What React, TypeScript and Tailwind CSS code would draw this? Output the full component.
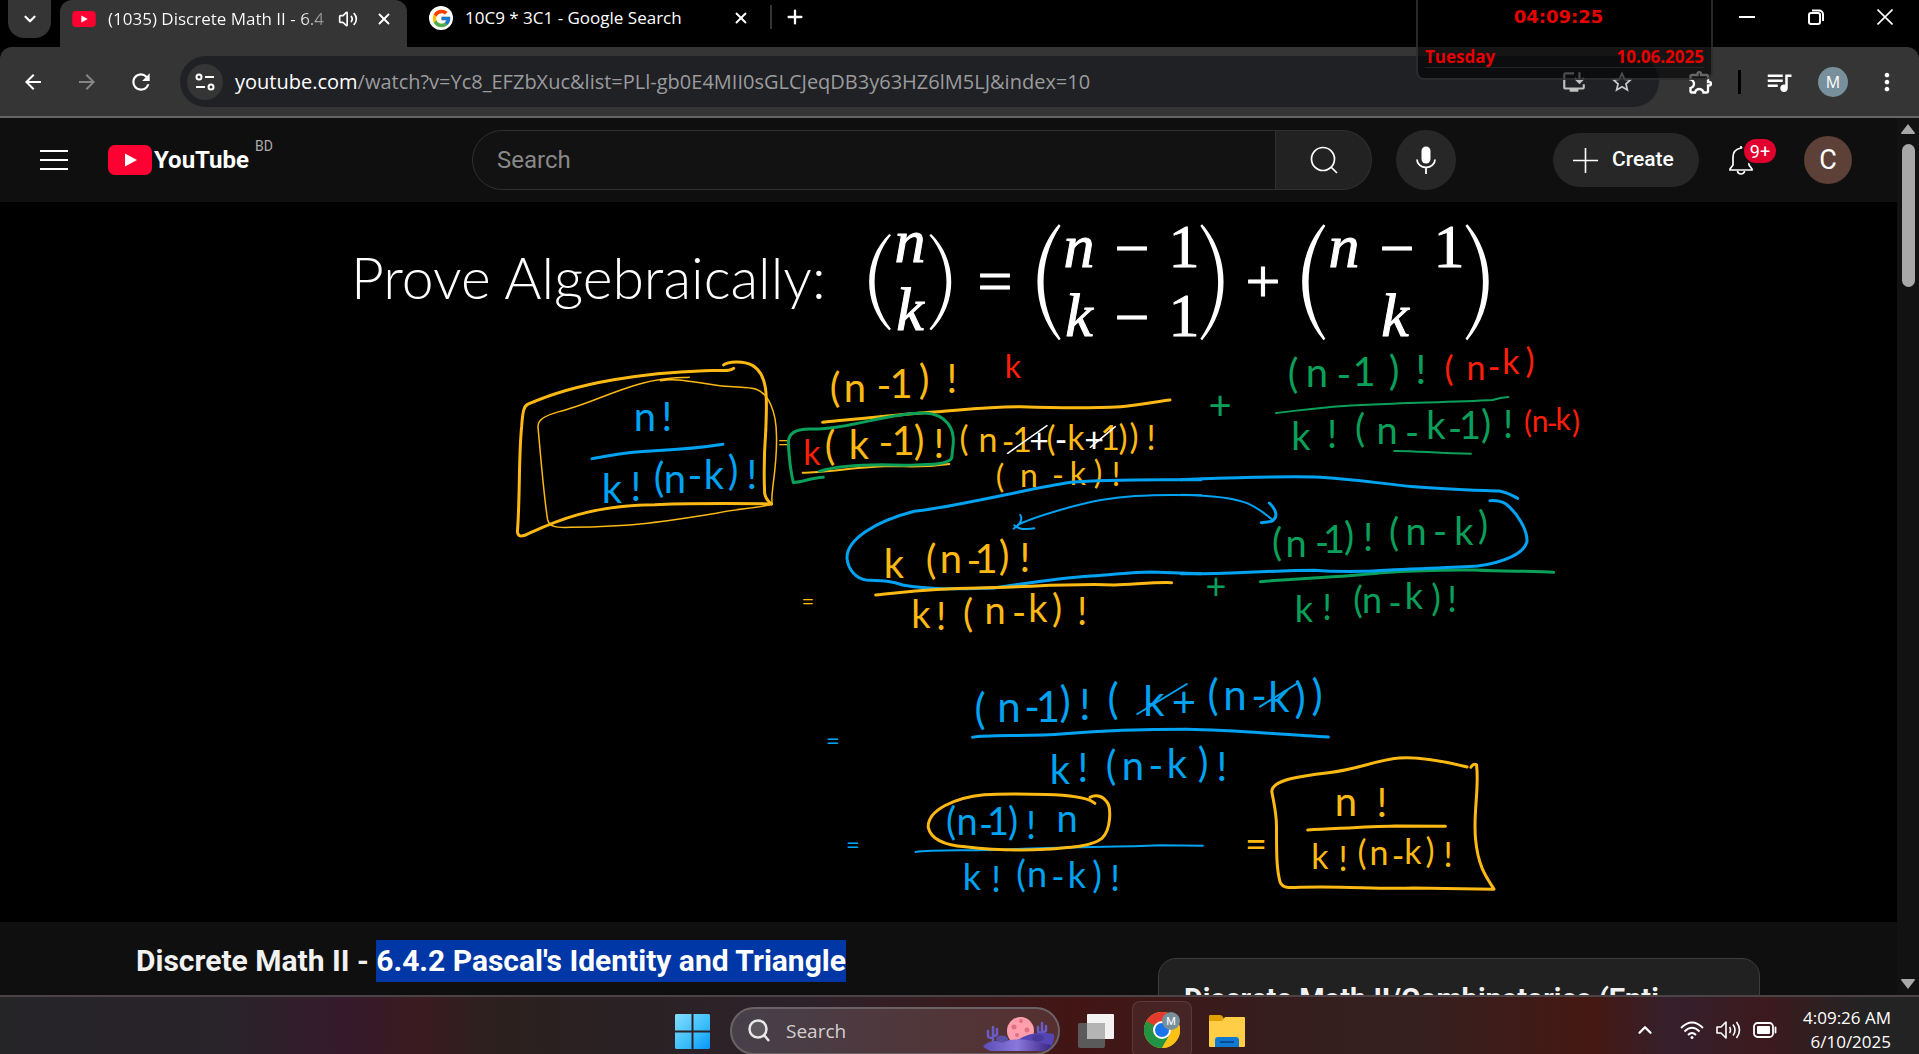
import React from 'react';
import { FcGoogle } from 'react-icons/fc';
import {
  MdArrowBack,
  MdArrowForward,
  MdMoreVert,
  MdOutlineExtension,
  MdOutlineInstallDesktop,
  MdQueueMusic,
  MdRefresh,
  MdStarOutline,
} from 'react-icons/md';
import { ChevronDown, ChevronUp, Plus, Volume2, X } from 'lucide-react';

const YELLOW = '#fdb913';
const BLUE = '#00a2f2';
const GREEN = '#0aa05a';
const RED = '#ff1e0a';

type Mark = [string, number, number, string?];

/** One handwritten expression; every mark has its centre x and its baseline. */
function Ink({ color, size, marks }: { color: string; size: number; marks: Mark[] }) {
  return (
    <text fill={color} fontSize={size} textAnchor="middle">
      {marks.map(([ch, x, y, own], i) => (
        <tspan key={i} x={x} y={y} fill={own ?? color}>
          {ch}
        </tspan>
      ))}
    </text>
  );
}

function Stroke({ d, color, w = 3 }: { d: string; color: string; w?: number }) {
  return <path d={d} stroke={color} strokeWidth={w} vectorEffect="non-scaling-stroke" />;
}

function Whiteboard() {
  return (
    <svg
      viewBox="308 202 1280 720"
      className="block h-[720px] w-[1280px] max-w-full"
      fontFamily="Lato, sans-serif"
      fill="none"
      strokeLinecap="round"
      strokeLinejoin="round"
      role="img"
      aria-label="Algebraic proof of Pascal's identity"
    >
      <text x="350" y="299" fontSize="57" fill="#fff" fontWeight="300">
        Prove Algebraically:
      </text>

      <g fill="#fff" fontFamily="'Liberation Serif', serif" fontSize="62" stroke="#fff" strokeWidth="1" textAnchor="middle">
        <text x="909" y="262" fontStyle="italic">n</text>
        <text x="909" y="330" fontStyle="italic">k</text>
        <text x="994" y="302">=</text>
        <text><tspan x="1078" y="267" fontStyle="italic">n</tspan><tspan x="1131" y="269">−</tspan><tspan x="1183" y="267">1</tspan></text>
        <text><tspan x="1078" y="336" fontStyle="italic">k</tspan><tspan x="1131" y="338">−</tspan><tspan x="1183" y="336">1</tspan></text>
        <text x="1262" y="302">+</text>
        <text><tspan x="1343" y="267" fontStyle="italic">n</tspan><tspan x="1396" y="269">−</tspan><tspan x="1448" y="267">1</tspan></text>
        <text x="1394" y="336" fontStyle="italic">k</text>
      </g>
      <g fill="#fff" transform="translate(840 210) scale(.4464 .3333)">
        <path d="M108 72C48 150 48 282 108 361L112 357C63 275 63 155 112 76Z" />
        <path d="M202 72C262 150 262 282 202 361L198 357C249 275 249 155 198 76Z" />
        <path d="M488 43C424 140 424 292 488 391L492 386C441 285 441 148 492 47Z" />
        <path d="M809 43C873 140 873 292 809 391L805 386C858 285 858 148 805 47Z" />
        <path d="M1081 43C1017 140 1017 292 1081 391L1085 386C1035 285 1035 148 1085 47Z" />
        <path d="M1403 43C1467 140 1467 292 1403 391L1399 386C1451 285 1451 148 1399 47Z" />
      </g>

      {/* Left side: n! / k!(n-k)! in its double box */}
      <g transform="translate(340 210) scale(.3827 .3333)">
        <Stroke color={YELLOW} w={3} d="M1026 475C1015 486 990 480 950 482C800 488 620 515 490 582C478 588 475 600 472 650C464 740 468 860 461 965C462 978 468 980 480 976C540 945 640 885 820 884C930 880 1020 880 1125 882" />
        <Stroke color={YELLOW} w={3} d="M1000 465C1010 455 1050 450 1075 466C1120 495 1112 580 1110 660C1105 740 1105 800 1107 850Q1110 870 1125 882" />
        <Stroke color={YELLOW} w={1.5} d="M910 502C860 505 830 505 780 522C700 548 640 585 570 605C530 618 512 630 515 655C522 740 530 860 540 930C545 950 560 954 600 952C760 950 850 935 980 910C1040 895 1090 895 1127 882C1120 860 1140 780 1138 680C1138 600 1115 550 1085 538C1060 528 1020 535 960 522C900 512 870 505 835 512" />
        <Stroke color={BLUE} w={3} d="M656 746C700 738 740 725 820 722C900 718 950 712 998 703" />
      </g>
      <Ink color={BLUE} size={40} marks={[['n', 644, 431], ['!', 666, 431]]} />
      <Ink color={BLUE} size={40} marks={[['k', 611, 503], ['!', 635, 501], ['(', 658, 492], ['n', 674, 493], ['-', 694, 490], ['k', 713, 489], [')', 732, 485], ['!', 751, 489]]} />

      {/* First and second yellow fractions with the linking loop */}
      <Ink color={YELLOW} size={22} marks={[['=', 783, 450]]} />
      <Ink color={YELLOW} size={40} marks={[['(', 834, 402], ['n', 854, 402], ['-', 883, 400], ['1', 900, 398], [')', 923, 394], ['!', 951, 393]]} />
      <Ink color={RED} size={32} marks={[['k', 1012, 378]]} />
      <Ink color={RED} size={34} marks={[['k', 811, 465]]} />
      <Ink color={YELLOW} size={40} marks={[['(', 829, 460], ['k', 858, 459], ['-', 885, 457], ['1', 902, 455], [')', 918, 455], ['!', 938, 458]]} />
      <Ink color={YELLOW} size={34} marks={[['(', 963, 451], ['n', 987, 452], ['-', 1007, 454], ['1', 1021, 452], ['+', 1038, 453, '#fff'], ['(', 1050, 451], ['-', 1060, 452, '#fff'], ['k', 1075, 450], ['+', 1093, 452, '#fff'], ['1', 1109, 450], [')', 1122, 450], [')', 1133, 449], ['!', 1150, 450]]} />
      <Ink color={YELLOW} size={32} marks={[['(', 999, 488], ['n', 1028, 487], ['-', 1057, 487], ['k', 1077, 485], [')', 1097, 484], ['!', 1115, 486]]} />
      <Ink color={YELLOW} size={40} marks={[['k', 893, 578], ['(', 930, 574], ['n', 950, 573], ['-', 973, 575], ['1', 985, 573], [')', 1003, 570], ['!', 1024, 572]]} />
      <Ink color={YELLOW} size={22} marks={[['=', 807, 609]]} />
      <Ink color={YELLOW} size={38} marks={[['k', 920, 628], ['!', 940, 630], ['(', 967, 627], ['n', 994, 624], ['-', 1018, 626], ['k', 1037, 622], [')', 1056, 622], ['!', 1081, 625]]} />
      <g transform="translate(760 340) scale(.3333)">
        <Stroke color={YELLOW} w={3} d="M185 247C260 240 400 225 520 216C620 208 680 200 780 200C900 204 980 205 1080 200C1140 196 1190 184 1227 180" />
        <Stroke color={YELLOW} w={2} d="M125 398C200 398 300 378 400 378C470 382 520 378 565 372" />
        <Stroke color={GREEN} w={3} d="M187 412C150 414 125 426 97 428C90 400 84 350 82 305C84 275 110 267 145 267C260 270 380 218 490 219C560 222 580 270 577 310L572 355C560 375 500 374 430 376C330 372 240 375 175 394" />
        <Stroke color="#ffffff" w={1.5} d="M740 340L858 257M988 322L1063 260" />
        <Stroke color={BLUE} w={3} d="M1320 419C1200 420 1050 416 930 427C780 450 600 498 460 514C340 545 256 600 258 655C262 690 285 715 315 720C360 722 390 722 425 735C520 752 620 746 700 744C800 730 880 715 990 708C1060 704 1110 696 1170 696L1320 701" />
        <Stroke color={BLUE} w={2} d="M1320 466C1180 462 1060 465 940 498C860 520 800 540 772 554" />
        <Stroke color={BLUE} w={2} d="M778 525C786 540 775 555 758 566M760 556C780 572 795 567 820 565" />
        <Stroke color={YELLOW} w={3} d="M344 765C420 758 500 745 650 744C820 740 940 730 1060 735C1130 732 1190 726 1232 728" />
      </g>

      {/* Green terms and their red factors */}
      <Ink color={GREEN} size={40} marks={[['+', 1219, 420]]} />
      <Ink color={GREEN} size={40} marks={[['(', 1292, 388], ['n', 1316, 387], ['-', 1343, 389], ['1', 1363, 386], [')', 1393, 385], ['!', 1420, 384]]} />
      <Ink color={RED} size={34} marks={[['(', 1448, 381], ['n', 1475, 380], ['-', 1493, 379], ['k', 1510, 374], [')', 1529, 373]]} />
      <Ink color={GREEN} size={38} marks={[['k', 1300, 450], ['!', 1331, 448], ['(', 1359, 442], ['n', 1386, 444], ['-', 1411, 446], ['k', 1435, 439], ['-', 1454, 442], ['1', 1469, 439], [')', 1485, 438], ['!', 1507, 438]]} />
      <Ink color={RED} size={30} marks={[['(', 1527, 433], ['n', 1539, 432], ['-', 1551, 434], ['k', 1562, 430], [')', 1575, 433]]} />
      <Ink color={GREEN} size={38} marks={[['(', 1276, 556], ['n', 1295, 557], ['-', 1321, 556], ['1', 1333, 553], [')', 1348, 550], ['!', 1367, 551], ['(', 1393, 546], ['n', 1415, 545], ['-', 1439, 545], ['k', 1463, 545], [')', 1482, 539]]} />
      <Ink color={GREEN} size={36} marks={[['+', 1215, 599]]} />
      <Ink color={GREEN} size={36} marks={[['k', 1303, 622], ['!', 1326, 620], ['(', 1357, 613], ['n', 1371, 613], ['-', 1394, 616], ['k', 1413, 609], [')', 1435, 611], ['!', 1451, 612]]} />
      <g transform="translate(1180 340) scale(.3333)">
        <Stroke color={GREEN} w={2} d="M285 219C380 208 440 198 560 194C700 188 820 186 935 180M935 180C950 175 965 172 982 171" />
        <Stroke color={GREEN} w={2} d="M640 333C700 332 780 341 870 341" />
        <Stroke color={BLUE} w={3} d="M0 419C140 414 280 408 400 411C520 416 600 432 700 440C800 448 880 450 955 453C980 457 995 468 1010 475" />
        <Stroke color={BLUE} w={2} d="M0 464C100 466 160 474 200 490C240 508 255 525 275 540" />
        <Stroke color={BLUE} w={3} d="M265 489C285 508 292 530 275 542C265 548 255 546 241 548" />
        <Stroke color={GREEN} w={3} d="M238 725C340 715 480 712 600 698C720 690 800 689 880 690C980 695 1060 692 1118 697" />
        <Stroke color={BLUE} w={3} d="M0 701C120 704 240 692 400 691C460 696 500 695 560 694C680 686 800 684 890 678C970 668 1030 640 1038 605C1040 570 1010 520 975 492C960 483 945 481 927 482" />
      </g>

      {/* Blue working and the boxed result */}
      <Ink color={BLUE} size={24} marks={[['=', 832, 749]]} />
      <Ink color={BLUE} size={24} marks={[['=', 852, 853]]} />
      <Ink color={YELLOW} size={38} marks={[['=', 1255, 858]]} />
      <Ink color={BLUE} size={42} marks={[['(', 979, 724], ['n', 1008, 722], ['-', 1031, 722], ['1', 1047, 722], [')', 1064, 717], ['!', 1084, 720], ['(', 1112, 714], ['k', 1153, 716], ['+', 1183, 717], ['(', 1212, 710], ['n', 1234, 710], ['-', 1258, 711], ['k', 1278, 712], [')', 1299, 713], [')', 1316, 710]]} />
      <Ink color={BLUE} size={40} marks={[['k', 1059, 784], ['!', 1082, 782], ['(', 1110, 780], ['n', 1132, 780], ['-', 1155, 780], ['k', 1176, 778], [')', 1202, 777], ['!', 1221, 781]]} />
      <Ink color={BLUE} size={38} marks={[['(', 950, 835], ['n', 966, 835], ['-', 985, 838], ['1', 997, 835], [')', 1012, 835], ['!', 1030, 839], ['n', 1066, 832]]} />
      <Ink color={BLUE} size={36} marks={[['k', 971, 890], ['!', 995, 892], ['(', 1020, 887], ['n', 1036, 887], ['-', 1057, 890], ['k', 1076, 888], [')', 1096, 888], ['!', 1114, 891]]} />
      <Ink color={YELLOW} size={40} marks={[['n', 1345, 816], ['!', 1381, 817]]} />
      <Ink color={YELLOW} size={34} marks={[['k', 1319, 869], ['!', 1342, 871], ['(', 1361, 865], ['n', 1378, 865], ['-', 1397, 868], ['k', 1412, 864], [')', 1429, 863], ['!', 1447, 867]]} />
      <g transform="translate(780 640) scale(.4719 .3333)">
        <Stroke color={BLUE} w={3} d="M406 292C440 284 520 290 600 281C700 270 780 268 860 268C960 270 1060 284 1160 291" />
        <Stroke color={BLUE} w={2} d="M755 222L860 132M1015 200L1092 132" />
        <Stroke color={BLUE} w={2} d="M285 636C330 628 400 634 500 627C600 620 720 622 800 616L894 617" />
        <Stroke color={YELLOW} w={3} d="M665 490C655 475 620 467 580 464C520 462 480 460 430 464C370 472 310 510 312 562C318 600 350 616 390 620C440 628 500 633 560 628C620 622 660 618 680 595C700 570 700 500 690 485C680 465 665 464 655 472" />
        <Stroke color={YELLOW} w={3} d="M1116 570C1180 566 1240 560 1300 558L1408 559" />
        <Stroke color={YELLOW} w={3} d="M1454 381C1400 362 1350 350 1310 354C1260 360 1220 390 1160 398C1100 408 1040 420 1040 455C1046 500 1050 520 1050 560C1050 640 1050 690 1058 728C1064 745 1075 744 1100 742C1200 738 1260 748 1340 744L1511 748C1500 720 1478 690 1472 600C1466 520 1480 450 1474 375C1470 370 1464 374 1462 382" />
      </g>
    </svg>
  );
}

function YouTubeMark({ className }: { className: string }) {
  return (
    <svg viewBox="0 0 44 30" className={className} aria-hidden="true">
      <rect width="44" height="30" rx="7" fill="#ff0033" />
      <path d="M17 8.500v13L29 15z" fill="#fff" />
    </svg>
  );
}

function TabStrip() {
  return (
    <div className="flex h-[47px] items-start bg-black text-white">
      <button aria-label="Search tabs" className="ml-2 flex h-[38px] w-[43px] items-center justify-center rounded-b-2xl bg-[#353535]">
        <ChevronDown size={18} strokeWidth={3} />
      </button>
      <div className="ml-[9px] flex h-full w-[347px] items-center rounded-t-xl bg-[#353535] pb-2.5 pl-3">
        <YouTubeMark className="h-4 w-6" />
        <span className="ml-3 w-[226px] whitespace-nowrap bg-linear-to-r from-white from-85% to-[#555] bg-clip-text text-[17px] text-transparent">
          (1035) Discrete Math II - 6.4
        </span>
        <Volume2 size={20} strokeWidth={2} className="ml-1" />
        <button aria-label="Close tab" className="ml-[17px]">
          <X size={18} strokeWidth={2.5} />
        </button>
      </div>
      <div className="flex h-9 w-[363px] items-center pl-[22px]">
        <span className="flex h-6 w-6 items-center justify-center rounded-full bg-white">
          <FcGoogle size={21} />
        </span>
        <span className="ml-3 flex-1 whitespace-nowrap text-[17px]">10C9 * 3C1 - Google Search</span>
        <button aria-label="Close tab" className="mr-5">
          <X size={18} strokeWidth={2.5} />
        </button>
      </div>
      <div className="mt-[5px] h-6 w-0.5 bg-[#353535]" />
      <button aria-label="New tab" className="ml-3 mt-[6px]">
        <Plus size={22} strokeWidth={2.5} />
      </button>
      <div className="ml-auto flex h-[34px] items-center gap-[53px] pr-[26px]">
        <button aria-label="Minimize" className="flex h-4 w-4 items-center">
          <span className="h-0.5 w-4 bg-white" />
        </button>
        <button aria-label="Restore">
          <svg viewBox="0 0 16 16" className="h-4 w-4" fill="none" stroke="#fff" strokeWidth="2">
            <rect x="1" y="4" width="11" height="11" rx="2" />
            <path d="M4 1.500h7a4 4 0 0 1 4 4V12" />
          </svg>
        </button>
        <button aria-label="Close window">
          <svg viewBox="0 0 16 16" className="h-4 w-4" stroke="#fff" strokeWidth="1.600">
            <path d="M.5.5l15 15M15.500.5l-15 15" />
          </svg>
        </button>
      </div>
    </div>
  );
}

function Toolbar() {
  return (
    <div className="bg-black">
      <div className="flex h-[71px] items-center rounded-t-xl border-b-2 border-[#666] bg-[#353535] text-white">
        <button aria-label="Back" className="ml-[21px]"><MdArrowBack size={24} /></button>
        <button aria-label="Forward" className="ml-[30px] text-[#868686]"><MdArrowForward size={24} /></button>
        <button aria-label="Reload" className="ml-[29px]"><MdRefresh size={26} /></button>
        <div className="ml-[26px] flex h-[51px] flex-1 items-center rounded-full bg-[#202125] pl-[7px] pr-6">
          <button aria-label="View site information" className="flex h-9 w-9 items-center justify-center rounded-full bg-[#353535]">
            <svg viewBox="0 0 20 20" className="h-5 w-5" fill="none" stroke="#fff" strokeWidth="2">
              <circle cx="4" cy="5" r="2.500" />
              <path d="M10 5h9M1 15h9" />
              <circle cx="16" cy="15" r="2.500" />
            </svg>
          </button>
          <span className="ml-3 flex-1 whitespace-nowrap text-[20px] text-[#9a9b9d]">
            <span className="text-white">youtube.com</span>
            /watch?v=Yc8_EFZbXuc&amp;list=PLl-gb0E4MII0sGLCJeqDB3y63HZ6lM5LJ&amp;index=10
          </span>
          <button aria-label="Install app" className="text-[#c0c0c0]"><MdOutlineInstallDesktop size={26} /></button>
          <button aria-label="Bookmark this tab" className="ml-[22px] text-[#c8c8c8]"><MdStarOutline size={26} /></button>
        </div>
        <button aria-label="Extensions" className="ml-7"><MdOutlineExtension size={28} /></button>
        <div className="ml-[23px] h-6 w-[3px] bg-black" />
        <button aria-label="Media controls" className="ml-[23px]"><MdQueueMusic size={30} /></button>
        <button aria-label="Profile" className="ml-6 flex h-[30px] w-[30px] items-center justify-center rounded-full bg-[#78909c] text-[16px]">
          M
        </button>
        <button aria-label="Menu" className="ml-[25px] mr-[18px]"><MdMoreVert size={28} /></button>
      </div>
    </div>
  );
}

function ClockWidget() {
  return (
    <div className="absolute right-[206px] top-0 flex h-20 w-[297px] flex-col justify-between rounded-b-lg border-2 border-t-0 border-[#3a3a3a]/70 bg-black/60 px-[7px] pb-2.5 pt-[5px] font-bold text-[#e60000]">
      <div className="pr-3 text-center font-['DejaVu_Sans',sans-serif] text-[18px] leading-6">04:09:25</div>
      <div className="flex justify-between border-b border-[#333]/60 text-[17px] leading-5">
        <span>Tuesday</span>
        <span>10.06.2025</span>
      </div>
    </div>
  );
}

function YouTubeHeader() {
  return (
    <header className="flex h-[84px] items-center bg-[#0f0f0f] text-white">
      <div className="flex w-[472px] shrink-0 items-center">
        <button aria-label="Guide" className="ml-10">
          <svg viewBox="0 0 28 20" className="h-5 w-7" stroke="#fff" strokeWidth="1.800">
            <path d="M0 1h28M0 10h28M0 19h28" />
          </svg>
        </button>
        <a href="#" className="ml-10 flex items-center">
          <YouTubeMark className="h-[30px] w-11" />
          <span className="ml-0.5 text-[24px] font-bold leading-8">YouTube</span>
          <span className="ml-1.5 pb-7 text-[14px] leading-4 text-[#aaa]">BD</span>
        </a>
      </div>
      <form className="flex h-[60px] max-w-[900px] flex-1">
        <input
          aria-label="Search"
          placeholder="Search"
          className="min-w-0 flex-1 rounded-l-full border border-[#303030] bg-[#121212] pl-6 text-[24px] outline-none placeholder:text-[#888]"
        />
        <button type="button" aria-label="Submit search" className="flex w-24 items-center justify-center rounded-r-full border border-l-0 border-[#303030] bg-[#222]">
          <svg viewBox="0 0 28 28" className="h-7 w-7" fill="none" stroke="#fff" strokeWidth="1.700">
            <circle cx="13" cy="13" r="11.500" />
            <path d="M21 21l6 6" />
          </svg>
        </button>
      </form>
      <button aria-label="Search with your voice" className="ml-6 mr-auto flex h-[60px] w-[60px] items-center justify-center rounded-full bg-[#272727]">
        <svg viewBox="0 0 20 28" className="h-7 w-5" fill="none" stroke="#fff" strokeWidth="1.800">
          <rect x="5.500" y="0.500" width="9" height="17" rx="4.500" fill="#fff" stroke="none" />
          <path d="M1 13.500a9 8 0 0 0 18 0M10 22v6" />
        </svg>
      </button>
      <button className="flex h-[54px] w-[146px] items-center gap-3.5 rounded-full bg-[#272727] pl-5 text-[21px] font-medium">
        <svg viewBox="0 0 25 25" className="h-[25px] w-[25px]" stroke="#fff" strokeWidth="1.600">
          <path d="M12.500 0v25M0 12.500h25" />
        </svg>
        Create
      </button>
      <button aria-label="Notifications" className="relative ml-[30px]">
        <svg viewBox="0 0 24 30" className="h-[30px] w-6" fill="none" stroke="#fff" strokeWidth="1.700">
          <path d="M1 25v-1l3-4v-8c0-5 3-8 8-9s8 4 8 9v8l3 4v1z" />
          <path d="M8.500 26a3.500 3 0 0 0 7 0" />
          <path d="M12 1v2" />
        </svg>
        <span className="absolute -top-1.5 left-[15px] flex h-6 w-8 items-center justify-center rounded-full bg-[#e1002d] text-[18px] ring-2 ring-[#0f0f0f]">9+</span>
      </button>
      <button aria-label="Account" className="ml-[51px] mr-[45px] flex h-12 w-12 items-center justify-center rounded-full bg-[#5d4037] text-[27px]">
        C
      </button>
    </header>
  );
}

function ChromeLogo() {
  return (
    <svg viewBox="0 0 36 36" className="h-9 w-9" aria-hidden="true">
      <circle cx="18" cy="18" r="18" fill="#fbc116" />
      <path d="M2.400 9A18 18 0 0 0 18 36l7.800-13.500L18 18l-7.800 4.500z" fill="#229342" />
      <path d="M2.400 9A18 18 0 0 1 33.600 9H18l-7.800 13.500z" fill="#e33b2e" />
      <path d="M2.400 9L10.200 22.500 18 18z" fill="#229342" />
      <path d="M33.600 9H18l7.800 13.500L18 36A18 18 0 0 0 33.600 9z" fill="#fbc116" />
      <circle cx="18" cy="18" r="9" fill="#fff" />
      <circle cx="18" cy="18" r="7" fill="#1a73e8" />
      <circle cx="27" cy="9" r="9" fill="#78909c" />
      <text x="27" y="13" fontSize="11" textAnchor="middle" fill="#fff" fontFamily="Roboto, sans-serif">M</text>
    </svg>
  );
}

function DesertArt() {
  return (
    <svg viewBox="0 0 72 34" className="mt-1.5 h-[34px] w-[72px]" aria-hidden="true">
      <defs>
        <linearGradient id="dune" x1="0" x2="1">
          <stop offset="0" stopColor="#5a4db5" />
          <stop offset=".5" stopColor="#8a78dc" />
          <stop offset="1" stopColor="#3a2584" />
        </linearGradient>
      </defs>
      <g stroke="#6a5cc8" strokeWidth="2.500" fill="none" strokeLinecap="round">
        <path d="M10 25V10M5 14v5q0 2 5 2M14 12v5q0 2-4 2" />
        <path d="M59 20V6M55 10v4q0 2 4 2M63 9v4q0 2-4 2" />
      </g>
      <ellipse cx="37.500" cy="14" rx="13.500" ry="14" fill="#ff9fae" />
      <g fill="#e0707f">
        <circle cx="31" cy="10" r="2.500" />
        <circle cx="38" cy="4" r="2" />
        <circle cx="44" cy="13" r="2.500" />
        <circle cx="34" cy="18" r="2" />
      </g>
      <path d="M30 26Q48 12 71 17Q72 26 66 32L40 32z" fill="#5544b4" />
      <path d="M0 29Q8 22 18 25Q36 20 50 24Q62 27 68 28Q66 34 58 34H8Q2 32 0 29z" fill="url(#dune)" />
      <ellipse cx="19" cy="22" rx="6" ry="3.500" fill="#5b50a8" />
      <ellipse cx="55" cy="21" rx="6" ry="3.500" fill="#473a9c" />
    </svg>
  );
}

function Taskbar() {
  return (
    <footer className="flex h-[59px] items-center border-t-2 border-[#4b4345] font-['Open_Sans',sans-serif] text-white">
      <div className="flex h-full w-full items-center bg-[linear-gradient(90deg,#252427_0%,#29232a_12%,#361a2b_18%,#3a1b20_22%,#2d201e_25%,#2a2124_32%,#2d222a_42%,#3a1a1d_51%,#431515_56%,#361d1e_66%,#35201f_74%,#451813_83%,#35202c_87%,#3c1a1e_92%,#242324_97%)]">
        <div className="ml-[675px] flex h-full items-start">
          <button aria-label="Start" className="mt-[17px]">
            <svg viewBox="0 0 35 35" className="h-[35px] w-[35px]">
              <defs>
                <linearGradient id="win" x2="1" y2="1">
                  <stop offset="0" stopColor="#85dcff" />
                  <stop offset=".6" stopColor="#38bdfa" />
                  <stop offset="1" stopColor="#0794fa" />
                </linearGradient>
              </defs>
              <path d="M1 0h15.500v16.500H0V1zM18.500 0H34l1 1v15.500H18.500zM0 18.500h16.500V35H1l-1-1zM18.500 18.500H35V34l-1 1H18.500z" fill="url(#win)" />
            </svg>
          </button>
          <label className="ml-5 mt-2.5 flex h-12 w-[330px] items-center rounded-full border-2 border-[#6b6265] bg-linear-to-r from-[#46404a] to-[#562f2f] pl-4 pr-[3px]">
            <svg viewBox="0 0 22 24" className="h-6 w-[22px]" fill="none" stroke="#e8e8e8" strokeWidth="2.500">
              <circle cx="10" cy="10" r="8.500" fill="#5c575c" />
              <path d="M16 16l5 6" />
            </svg>
            <input aria-label="Search" placeholder="Search" className="ml-4 w-[150px] flex-1 bg-transparent text-[19px] outline-none placeholder:text-[#d5d0d0]" />
            <DesertArt />
          </label>
          <button aria-label="Task view" className="ml-[18px] mt-[17px]">
            <svg viewBox="0 0 36 34" className="h-[34px] w-9">
              <rect y="9" width="27" height="25" rx="2" fill="#5a5a5a" />
              <rect x="9" width="27" height="25" rx="1" fill="#f2f2f2" />
              <rect x="9" y="9" width="18" height="16" fill="#b4b4b4" />
            </svg>
          </button>
          <button aria-label="Google Chrome" className="ml-[18px] mt-1 flex h-[57px] w-[60px] items-center justify-center rounded-lg border border-white/10 bg-white/5">
            <ChromeLogo />
          </button>
          <button aria-label="File Explorer" className="ml-[17px] mt-[17px]">
            <svg viewBox="0 0 36 34" className="h-[34px] w-9">
              <path d="M0 2q0-1 1-1h10q2 0 3 2l1 2v6H0z" fill="#e0a000" />
              <path d="M0 7h13l3-4h19q1 0 1 1v28q0 1-1 1H1q-1 0-1-1z" fill="#ffce46" />
              <path d="M6 33V26q0-3 3-3h18q3 0 3 3v7z" fill="#0f78d0" />
              <path d="M11 28h14" stroke="#0a4a90" strokeWidth="2" />
            </svg>
          </button>
        </div>
        <div className="ml-auto flex items-center pr-7 pt-2">
          <button aria-label="Show hidden icons"><ChevronUp size={22} strokeWidth={2.5} /></button>
          <svg viewBox="0 0 24 20" className="ml-6 h-5 w-6" fill="none" stroke="#fff" strokeWidth="1.800">
            <path d="M1 8q11-11 22 0M4.500 11.500q7.500-7.500 15 0M8 15q4-4 8 0" />
            <circle cx="12" cy="17.500" r="1.500" fill="#fff" stroke="none" />
          </svg>
          <svg viewBox="0 0 25 20" className="ml-3 h-5 w-[25px]" fill="none" stroke="#fff" strokeWidth="1.600" strokeLinejoin="round">
            <path d="M1 7h4l5-5v16l-5-5H1zM13.500 7q2 3 0 6M17 4.500q4 5.500 0 11M20.500 2q6 8 0 16" />
          </svg>
          <svg viewBox="0 0 24 16" className="ml-3 h-4 w-6" fill="none" stroke="#fff" strokeWidth="1.800">
            <rect x="1" y="1" width="19" height="14" rx="3.500" />
            <rect x="4" y="4" width="13" height="8" rx="1" fill="#fff" stroke="none" />
            <path d="M22.500 5.500v5" strokeLinecap="round" />
          </svg>
          <div className="ml-3 w-[102px] text-right text-[17px] leading-6">
            <div>4:09:26 AM</div>
            <div>6/10/2025</div>
          </div>
        </div>
      </div>
    </footer>
  );
}

export default function App() {
  return (
    <div className="relative flex h-screen flex-col overflow-hidden bg-[#0f0f0f] font-['Open_Sans',sans-serif]">
      <TabStrip />
      <Toolbar />
      <div className="flex min-h-0 flex-1 font-[Roboto,sans-serif]">
        <main className="min-w-0 flex-1 overflow-hidden">
          <YouTubeHeader />
          <section className="flex justify-center bg-black">
            <Whiteboard />
          </section>
          <div className="flex justify-between pl-[136px] pr-[137px]">
            <h1 className="mt-[18px] whitespace-nowrap text-[30px] font-bold leading-[42px] text-[#f1f1f1]">
              Discrete Math II - <span className="inline-block bg-[#0037a6] text-white">6.4.2 Pascal's Identity and Triangle</span>
            </h1>
            <aside className="mt-9 h-40 w-[602px] rounded-[18px] border border-[#3d3d3d] bg-[#212121] px-[25px] pt-[19px]">
              <h2 className="text-[29px] font-bold leading-[42px] text-[#f1f1f1]">Discrete Math II/Combinatorics (Enti</h2>
            </aside>
          </div>
        </main>
        <div className="flex w-[22px] flex-col items-center bg-[#121212] py-[6px]">
          <svg viewBox="0 0 14 10" className="h-2.5 w-3.5"><path d="M7 0l7 9q0 1-1 1H1q-1 0-1-1z" fill="#a8a8a8" /></svg>
          <div className="mt-2.5 h-[143px] w-[13px] rounded-full bg-[#a8a8a8]" />
          <svg viewBox="0 0 14 10" className="mt-auto h-2.5 w-3.5"><path d="M7 10l7-9q0-1-1-1H1Q0 0 0 1z" fill="#a8a8a8" /></svg>
        </div>
      </div>
      <Taskbar />
      <ClockWidget />
    </div>
  );
}
